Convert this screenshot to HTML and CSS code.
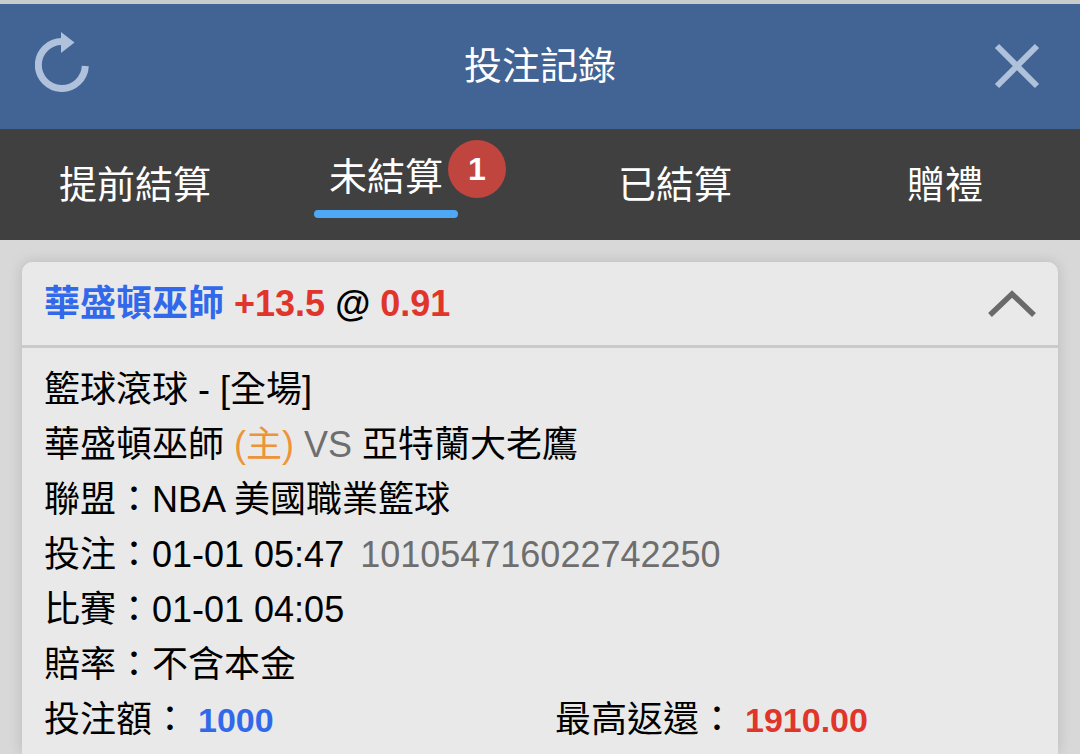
FILE: index.html
```html
<!DOCTYPE html>
<html lang="zh-Hant">
<head>
<meta charset="utf-8">
<meta name="viewport" content="width=device-width, initial-scale=1">
<title>投注記錄</title>
<link rel="stylesheet" href="styles.css">
</head>
<body>
<header class="topbar">
  <button class="icon-button" type="button" aria-label="重新整理">
    <svg class="icon-refresh" viewBox="0 0 54 60" aria-hidden="true">
      <path d="M27 9.500A23.500 23.500 0 1 0 50.300 34" fill="none" stroke="currentColor" stroke-width="7"/>
      <path d="M26 0L39.500 10.500L26 21Z" fill="currentColor"/>
    </svg>
  </button>
  <h1 class="title">投注記錄</h1>
  <button class="icon-button" type="button" aria-label="關閉">
    <svg class="icon-close" viewBox="0 0 46 46" aria-hidden="true">
      <path d="M3 3L43 43M43 3L3 43" fill="none" stroke="currentColor" stroke-width="6"/>
    </svg>
  </button>
</header>
<nav class="tabs">
  <button class="tab" type="button">提前結算</button>
  <button class="tab" type="button" aria-current="page"><span class="tab-active">未結算<span class="badge">1</span></span></button>
  <button class="tab" type="button">已結算</button>
  <button class="tab" type="button">贈禮</button>
</nav>
<main class="content">
  <article class="card">
    <header class="card-header">
      <h2 class="pick"><span class="team">華盛頓巫師</span> <span class="red">+13.5</span> <span class="at">@</span> <span class="red">0.91</span></h2>
      <button class="icon-button" type="button" aria-label="收合">
        <svg class="icon-chevron" viewBox="0 0 48 28" aria-hidden="true">
          <path d="M2 25L24 4L46 25" fill="none" stroke="currentColor" stroke-width="5.500"/>
        </svg>
      </button>
    </header>
    <div class="card-body">
      <p class="line">籃球滾球 - [全場]</p>
      <p class="line">華盛頓巫師 <span class="home">(主)</span> <span class="muted">VS</span> 亞特蘭大老鷹</p>
      <p class="line">聯盟：NBA 美國職業籃球</p>
      <p class="line">投注：01-01 05:47<span class="muted ticket">101054716022742250</span></p>
      <p class="line">比賽：01-01 04:05</p>
      <p class="line">賠率：不含本金</p>
      <div class="amounts">
        <p class="line">投注額： <strong class="amount blue">1000</strong></p>
        <p class="line">最高返還： <strong class="amount red">1910.00</strong></p>
      </div>
    </div>
  </article>
</main>
</body>
</html>
```
FILE: styles.css
```css
* {
  box-sizing: border-box;
}

body {
  margin: 0;
  min-height: 100vh;
  display: flex;
  flex-direction: column;
  background: #d8d8d8;
  color: #000;
  font-family: "Liberation Sans", "Noto Sans CJK TC", sans-serif;
  font-size: 36px;
}

h1, h2, p {
  margin: 0;
}

button {
  margin: 0;
  padding: 0;
  border: 0;
  background: none;
  color: inherit;
  font: inherit;
}

svg {
  display: block;
}

.topbar {
  display: flex;
  align-items: center;
  justify-content: space-between;
  padding: 28px 35px 29px;
  border-top: 4px solid #c9cccb;
  background: #416494;
  color: #fff;
}

.topbar .icon-button {
  width: 54px;
  color: #b0c1db;
}

.title {
  font-size: 38px;
  font-weight: 400;
  line-height: 62px;
}

.icon-refresh {
  width: 54px;
  height: 60px;
  margin-bottom: 8px;
}

.icon-close {
  width: 46px;
  height: 46px;
  margin-left: 3px;
}

.tabs {
  display: grid;
  grid-template-columns: repeat(4, 1fr);
  background: #404040;
  color: #fff;
  font-size: 38px;
}

.tab {
  display: flex;
  align-items: center;
  justify-content: center;
  height: 111px;
  padding-bottom: 6px;
}

.tab-active {
  position: relative;
  margin-right: 38px;
  padding: 6px 15px 0;
  line-height: 50px;
}

.tab-active::after {
  content: "";
  display: block;
  height: 8px;
  margin: 8px -15px 0;
  border-radius: 4px;
  background: #4ea8f5;
}

.badge {
  position: absolute;
  top: -6px;
  right: -48px;
  width: 58px;
  height: 58px;
  border-radius: 50%;
  background: #c0453f;
  font-size: 32px;
  font-weight: 700;
  line-height: 58px;
}

.content {
  flex: 1;
  display: flex;
  flex-direction: column;
  padding: 22px 22px 0;
}

.card {
  flex: 1;
  border-radius: 10px 10px 0 0;
  background: #e9e9e9;
  box-shadow: 0 0 14px rgba(0, 0, 0, 0.14);
}

.card-header {
  display: flex;
  align-items: center;
  justify-content: space-between;
  padding: 14px 22px;
  border-bottom: 3px solid #cacaca;
}

.pick {
  font-size: 36px;
  font-weight: 700;
  line-height: 55px;
}

.icon-chevron {
  width: 48px;
  height: 28px;
  color: #6a6a6a;
}

.team,
.blue {
  color: #3269ea;
}

.red {
  color: #e0352b;
}

.home {
  color: #ed9439;
}

.muted {
  color: #6e6e6e;
}

.card-body {
  padding: 14px 22px 0;
}

.line {
  line-height: 55px;
}

.ticket {
  margin-left: 16px;
}

.amounts {
  display: grid;
  grid-template-columns: 1fr 1fr;
  column-gap: 30px;
}

.amount {
  font-size: 34px;
}
```
